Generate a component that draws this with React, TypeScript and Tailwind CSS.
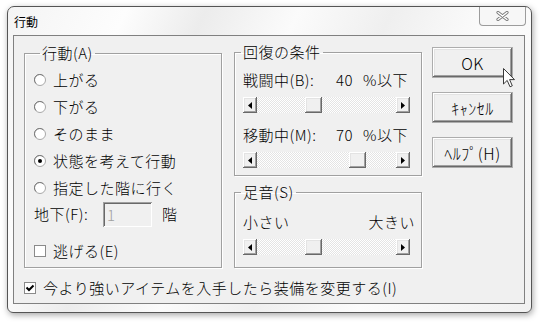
import React from "react"

const raised =
  "bg-[#f0f0f0] shadow-[inset_-1px_-1px_#696969,inset_1px_1px_#ffffff,inset_-2px_-2px_#a0a0a0,inset_2px_2px_#e3e3e3]"

function Radio({ checked }: { checked?: boolean }) {
  return (
    <svg width="12" height="12" viewBox="0 0 12 12" className="shrink-0">
      <circle cx="6" cy="6" r="5.5" fill="#ffffff" stroke="#a7a7a7" />
      <path d="M2 9.5 A5 5 0 0 1 9.5 2" fill="none" stroke="#7a7a7a" strokeWidth="1" />
      {checked && <circle cx="6" cy="6" r="2" fill="#000000" />}
    </svg>
  )
}

function Check({ checked }: { checked?: boolean }) {
  return (
    <svg width="12" height="12" viewBox="0 0 12 12" className="shrink-0">
      <rect x="0.5" y="0.5" width="11" height="11" fill="#ffffff" stroke="#8a8a8a" />
      {checked && <path d="M2.5 5.5 L5 8 L9.5 3.5" fill="none" stroke="#000000" strokeWidth="2" />}
    </svg>
  )
}

function ArrowBtn({ dir }: { dir: "left" | "right" }) {
  return (
    <div className={`w-[14px] h-[16px] flex items-center justify-center ${raised}`}>
      <svg width="4" height="7" viewBox="0 0 4 7">
        {dir === "left" ? <path d="M4 0 L0 3.5 L4 7 Z" fill="#000" /> : <path d="M0 0 L4 3.5 L0 7 Z" fill="#000" />}
      </svg>
    </div>
  )
}

function ScrollBar({ offset }: { offset: number }) {
  return (
    <div className="ml-[8px] w-[167px] h-[16px] flex">
      <ArrowBtn dir="left" />
      <div className="flex-1 flex bg-[repeating-conic-gradient(#e4e4e4_0%_25%,#ffffff_0%_50%)] bg-[length:2px_2px]">
        <div className={`w-[17px] h-[16px] ${raised}`} style={{ marginLeft: offset }} />
      </div>
      <ArrowBtn dir="right" />
    </div>
  )
}

function Group({ title, className, children }: { title: string; className: string; children: React.ReactNode }) {
  return (
    <fieldset className={`border border-[#a0a0a0] shadow-[inset_1px_1px_#ffffff,1px_1px_#ffffff] ${className}`}>
      <legend className="ml-[6px] px-[2px] leading-[18px]">{title}</legend>
      {children}
    </fieldset>
  )
}

function Button({ label }: { label: string }) {
  return (
    <div className={`w-[81px] h-[31px] flex items-center justify-center ${raised} border border-[#adadad]`}>
      {label}
    </div>
  )
}

export default function App() {
  const options = ["上がる", "下がる", "そのまま", "状態を考えて行動", "指定した階に行く"]

  return (
    <div className="relative w-[540px] h-[322px] bg-white overflow-hidden text-[15px] tracking-[0.5px] font-light text-black font-[family-name:'Noto_Sans_CJK_JP',sans-serif]">
      <div className="ml-[7px] mt-[6px] w-[525px] h-[307px] rounded-t-[7px] rounded-b-[6px] border border-[#555555] shadow-[1px_2px_6px_rgba(0,0,0,0.35)] bg-[linear-gradient(115deg,#f4f4f4_0%,#fdfdfd_18%,#ececec_30%,#fbfbfb_44%,#efefef_58%,#fcfcfc_74%,#f1f1f1_100%)] px-[5px] flex flex-col">
        {/* title bar */}
        <div className="h-[28px] flex items-start justify-between">
          <span className="ml-[1px] mt-[7px] text-[12px] leading-[16px] tracking-normal font-normal">行動</span>
          <div className="w-[47px] h-[19px] rounded-b-[4px] border border-t-0 border-[#9c9c9c] bg-[#f7f7f7] flex items-center justify-center">
            <svg width="13" height="10" viewBox="0 0 13 10">
              <path d="M2 1.5 L11 8.5 M11 1.5 L2 8.5" stroke="#7a7a7a" strokeWidth="3.2" strokeLinecap="round" />
              <path d="M2 1.5 L11 8.5 M11 1.5 L2 8.5" stroke="#ffffff" strokeWidth="1.4" strokeLinecap="round" />
            </svg>
          </div>
        </div>

        {/* client area */}
        <div className="w-[512px] h-[269px] border border-[#808080] bg-[#f0f0f0] pl-[10px] flex flex-col">
          <div className="flex items-start">
            <Group title="行動(A)" className="mt-[8px] w-[198px] h-[224px] pl-[9px] pt-[4px]">
              {options.map((o, i) => (
                <div key={o} className="h-[27px] flex items-center gap-[7px]">
                  <Radio checked={i === 3} />
                  <span className="leading-[18px]">{o}</span>
                </div>
              ))}
              <div className="h-[26px] flex items-center">
                <span className="w-[69px] leading-[18px]">地下(F):</span>
                <div className="w-[49px] h-[25px] bg-[#f0f0f0] shadow-[inset_1px_1px_#a0a0a0,inset_-1px_-1px_#ffffff,inset_2px_2px_#696969] pl-[4px] text-[#a0a0a0] leading-[25px]">
                  1
                </div>
                <span className="ml-[10px] leading-[18px]">階</span>
              </div>
              <div className="mt-[11px] h-[26px] flex items-center gap-[7px]">
                <Check />
                <span className="leading-[18px]">逃げる(E)</span>
              </div>
            </Group>

            <div className="ml-[12px] mt-[7px] w-[188px] flex flex-col">
              <Group title="回復の条件" className="h-[133px] pt-[10px]">
                <div className="pl-[8px] h-[18px] flex items-center leading-[18px]">
                  <span className="w-[93px]">戦闘中(B):</span>
                  <span className="w-[27px]">40</span>
                  <span>%以下</span>
                </div>
                <div className="mt-[8px]">
                  <ScrollBar offset={48} />
                </div>
                <div className="mt-[13px] pl-[8px] h-[18px] flex items-center leading-[18px]">
                  <span className="w-[93px]">移動中(M):</span>
                  <span className="w-[27px]">70</span>
                  <span>%以下</span>
                </div>
                <div className="mt-[8px]">
                  <ScrollBar offset={92} />
                </div>
              </Group>
              <Group title="足音(S)" className="mt-[7px] h-[85px] pt-[12px]">
                <div className="pl-[8px] pr-[6px] h-[18px] flex items-center justify-between leading-[18px]">
                  <span>小さい</span>
                  <span>大きい</span>
                </div>
                <div className="mt-[8px]">
                  <ScrollBar offset={48} />
                </div>
              </Group>
            </div>

            <div className="ml-[10px] mt-[11px] flex flex-col gap-[14px] text-[16px]">
              <Button label="OK" />
              <Button label="ｷｬﾝｾﾙ" />
              <Button label="ﾍﾙﾌﾟ(H)" />
            </div>
          </div>

          <div className="mt-[11px] h-[18px] flex items-center gap-[7px]">
            <Check checked />
            <span className="leading-[18px]">今より強いアイテムを入手したら装備を変更する(I)</span>
          </div>
        </div>
      </div>

      {/* mouse pointer */}
      <svg className="absolute left-[503px] top-[68px]" width="13" height="20" viewBox="0 0 13 20">
        <path d="M0.5 0.5 L0.5 16 L4.2 12.4 L7 18.8 L9.3 17.8 L6.6 11.6 L11.5 11.6 Z" fill="#ffffff" stroke="#3a3a3a" strokeWidth="1" strokeLinejoin="round" />
      </svg>
    </div>
  )
}
